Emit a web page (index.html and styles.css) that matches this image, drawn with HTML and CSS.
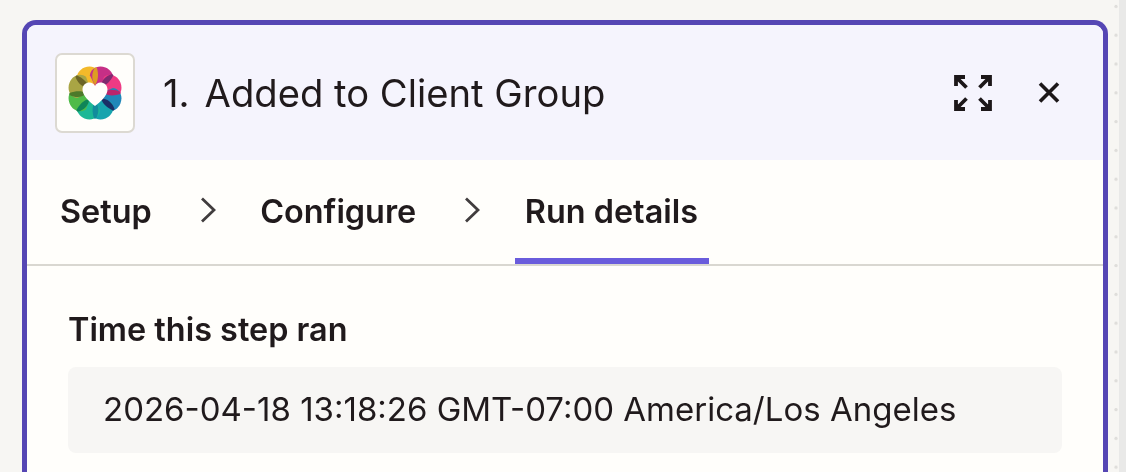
FILE: index.html
```html
<!DOCTYPE html>
<html lang="en">
<head>
<meta charset="utf-8">
<title>Added to Client Group</title>
<link rel="stylesheet" href="styles.css">
</head>
<body>
<div class="stage">
  <section class="panel">
    <header class="head">
      <div class="logo">
        <svg class="flower" width="56" height="56" viewBox="-28 -28 56 56">
          <defs>
            <path id="petal" d="M0 -4L-11.500 -14.500C-13.500 -21-8 -27.500 0 -27.500C8 -27.500 13.500 -21 11.500 -14.500Z"/>
            <path id="streak" d="M0 -8C-4 -13-4.500 -19-1 -25.500L1 -25.500C3 -19 3 -13 0 -8Z"/>
          </defs>
          <use href="#petal" fill="#f3b92a" transform="rotate(-22.500)"/>
          <use href="#petal" fill="#c62f86" transform="rotate(22.500)"/>
          <use href="#petal" fill="#ee3a84" transform="rotate(67.500)"/>
          <use href="#petal" fill="#2087b9" transform="rotate(112.500)"/>
          <use href="#petal" fill="#17a4ae" transform="rotate(157.500)"/>
          <use href="#petal" fill="#1cb896" transform="rotate(202.500)"/>
          <use href="#petal" fill="#4fbb48" transform="rotate(247.500)"/>
          <use href="#petal" fill="#a9a544" transform="rotate(292.500)"/>
          <use href="#streak" fill="#dd9c22" transform="rotate(2)"/>
          <use href="#streak" fill="#7f2a70" transform="rotate(44)"/>
          <use href="#streak" fill="#b9246c" transform="rotate(90)"/>
          <use href="#streak" fill="#1a2f66" transform="rotate(132)"/>
          <use href="#streak" fill="#128c9c" transform="rotate(180)"/>
          <use href="#streak" fill="#0f8558" transform="rotate(225)"/>
          <use href="#streak" fill="#4d7a2a" transform="rotate(268)"/>
          <use href="#streak" fill="#6c6526" transform="rotate(312)"/>
          <path fill="#fffefc" d="M0 13C-5 9-12.500 3-12.500-3.500C-12.500-8-9-10.500-5.500-10.500C-3-10.500-1-9 0-7C1-9 3-10.500 5.500-10.500C9-10.500 12.500-8 12.500-3.500C12.500 3 5 9 0 13Z"/>
        </svg>
      </div>
      <h1 class="title"><span class="num">1.</span>Added to Client Group</h1>
      <div class="actions">
        <svg class="expand" width="40" height="38" viewBox="0 0 40 38" fill="none" stroke="#1c1719" stroke-width="3.800">
          <path d="M3 12V3H12M3.500 3.500L13.500 13.500"/>
          <path d="M37 12V3H28M36.500 3.500L26.500 13.500"/>
          <path d="M3 26V35H12M3.500 34.500L13.500 24.500"/>
          <path d="M37 26V35H28M36.500 34.500L26.500 24.500"/>
        </svg>
        <svg class="close" width="22" height="21" viewBox="0 0 22 21" fill="none" stroke="#1c1719" stroke-width="3.600">
          <path d="M2 1.500L20 19.500M20 1.500L2 19.500"/>
        </svg>
      </div>
    </header>
    <nav class="tabs">
      <span class="tab">Setup</span>
      <svg class="chev" width="16" height="26" viewBox="0 0 16 26" fill="none" stroke="#413d3e" stroke-width="2.800"><path d="M2 1.500L14 13L2 24.500"/></svg>
      <span class="tab">Configure</span>
      <svg class="chev" width="16" height="26" viewBox="0 0 16 26" fill="none" stroke="#413d3e" stroke-width="2.800"><path d="M2 1.500L14 13L2 24.500"/></svg>
      <span class="tab active">Run details</span>
    </nav>
    <div class="body">
      <div class="label">Time this step ran</div>
      <div class="value">2026-04-18 13:18:26 GMT-07:00 America/Los Angeles</div>
    </div>
  </section>
  <aside class="rail"><div class="strip"></div></aside>
</div>
</body>
</html>
```
FILE: styles.css
```css
html, body {
  margin: 0;
  height: 100%;
  overflow: hidden;
}
body {
  background: #f7f6f3;
  font-family: Inter, "Liberation Sans", sans-serif;
  color: #201a1c;
}
.stage {
  display: flex;
  align-items: flex-start;
  height: 472px;
  padding-left: 22px;
  filter: blur(0.35px);
}
.panel {
  width: 1086px;
  height: 452px;
  flex: none;
  box-sizing: border-box;
  margin-top: 20px;
  border: 5px solid #5546b4;
  border-bottom: 0;
  border-radius: 14px 14px 0 0;
  background: #fffefb;
  overflow: hidden;
}
.head {
  display: flex;
  align-items: center;
  height: 135px;
  box-sizing: border-box;
  padding: 0 43px 0 28px;
  background: #f5f4fd;
}
.logo {
  width: 80px;
  height: 80px;
  box-sizing: border-box;
  border: 2px solid #dcd9d2;
  border-radius: 7px;
  background: #fffefb;
  display: flex;
  align-items: center;
  justify-content: center;
  flex: none;
}
.title {
  margin: 0 0 0 28px;
  font-size: 38.200px;
  font-weight: 400;
  line-height: 48px;
  white-space: nowrap;
}
.num {
  margin-right: 15px;
}
.actions {
  margin-left: auto;
  display: flex;
  align-items: center;
  gap: 45px;
}
.tabs {
  display: flex;
  align-items: center;
  height: 106px;
  box-sizing: border-box;
  padding-left: 33px;
  border-bottom: 2px solid #d9d7d1;
}
.tab {
  font-size: 32.400px;
  font-weight: 600;
  line-height: 40px;
  white-space: nowrap;
}
.chev {
  margin: 0 44.500px 4px 48px;
  flex: none;
}
.tab.active {
  position: relative;
}
.tab.active::after {
  content: "";
  position: absolute;
  left: -10px;
  right: -11px;
  top: 66px;
  height: 6px;
  background: #6a5cdc;
}
.body {
  padding: 44px 41px 0 41px;
}
.label {
  font-size: 32.400px;
  font-weight: 600;
  line-height: 40px;
}
.value {
  margin-top: 17px;
  height: 86px;
  box-sizing: border-box;
  padding: 0 0 2px 35px;
  display: flex;
  align-items: center;
  background: #f7f6f4;
  border-radius: 8px;
  font-size: 33px;
  line-height: 40px;
  white-space: nowrap;
}
.rail {
  flex: 1;
  height: 472px;
  display: flex;
  justify-content: flex-end;
  background-image: radial-gradient(circle at 8px 14.500px, #dfdedb 1.300px, transparent 2px);
  background-size: 100% 28.800px;
  background-position: 0 -8px;
}
.strip {
  width: 7px;
  height: 100%;
  background: #e9e9e8;
}
```
